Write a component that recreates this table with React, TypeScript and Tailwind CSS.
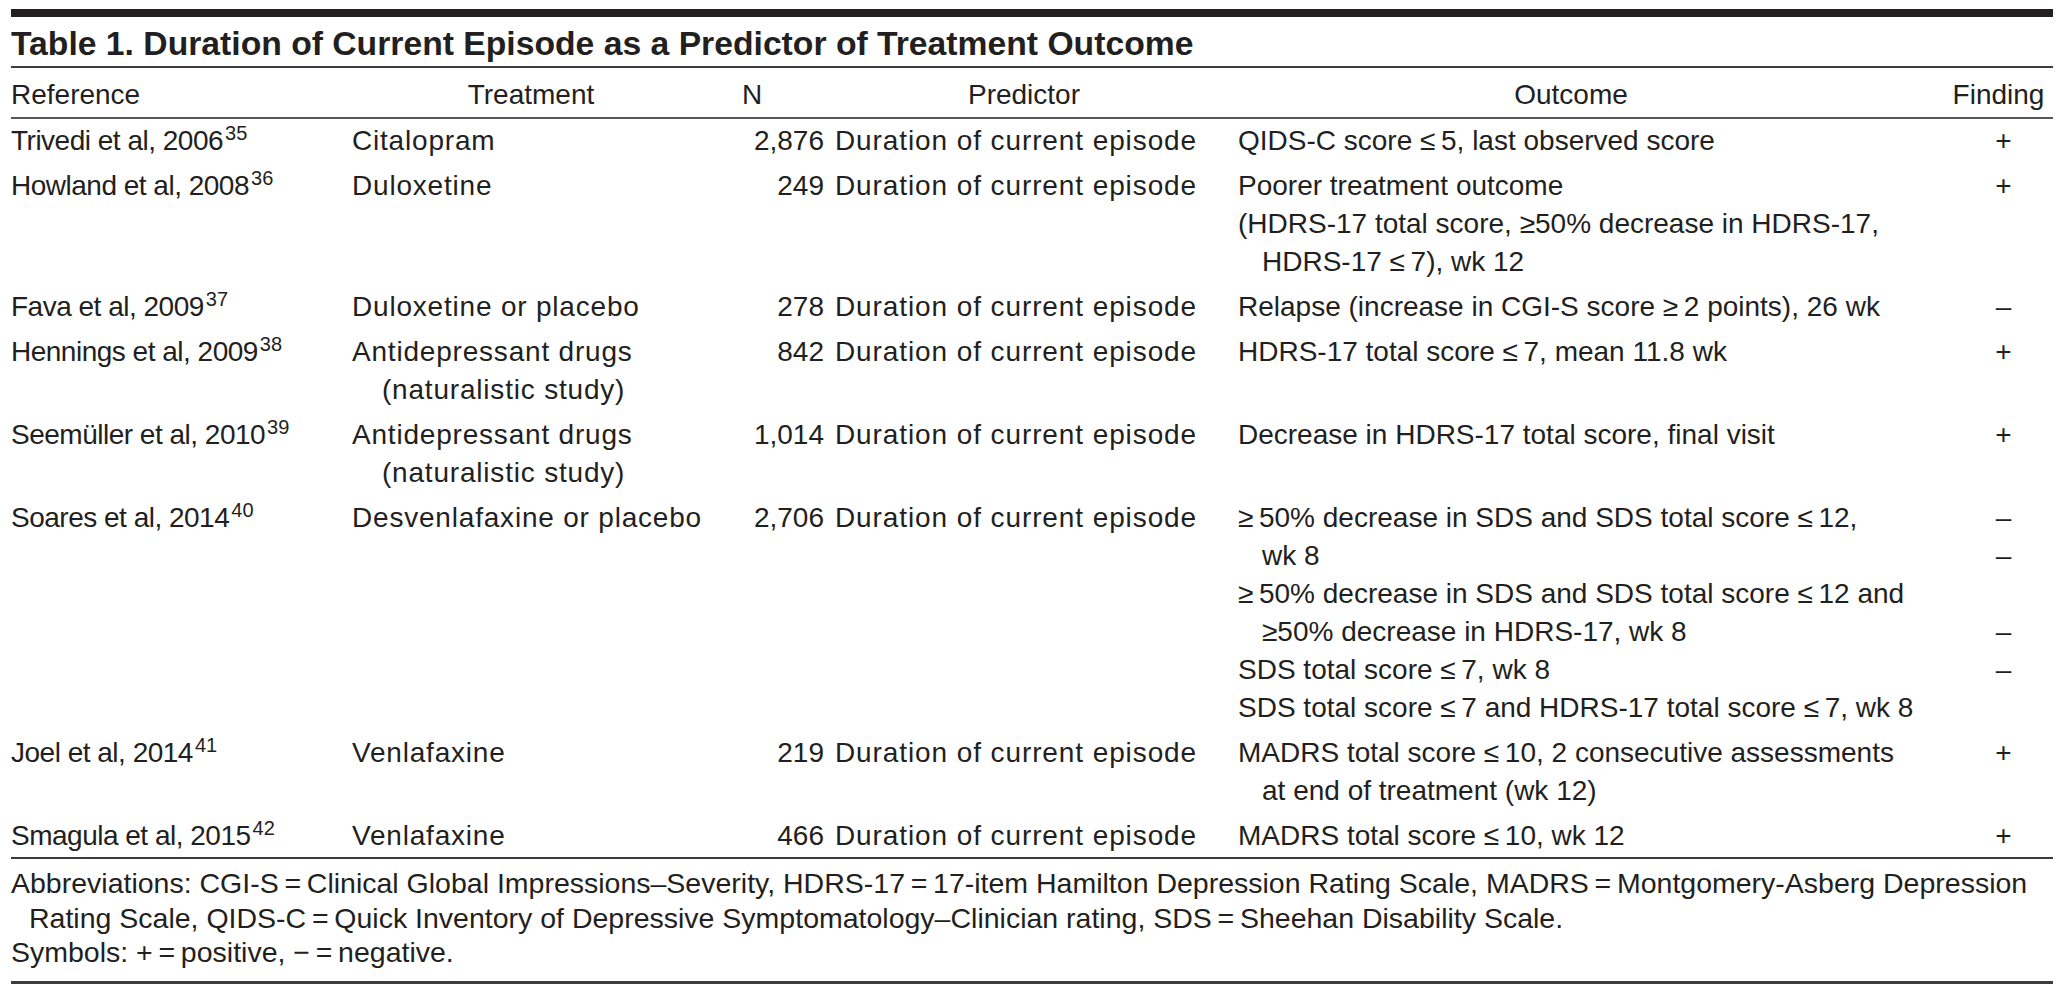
import React from 'react';

// One outcome line: text, whether it is a hanging-indent continuation, and its finding mark.
type Line = { text: string; indent?: boolean; finding?: string };

interface Study {
  reference: string;
  sup: string;
  treatment: Line[];
  n: string;
  predictor: string;
  outcome: Line[];
}

const T = '\u2009'; // thin space used around = and ≤ in the typeset table

const STUDIES: Study[] = [
  {
    reference: 'Trivedi et al, 2006',
    sup: '35',
    treatment: [{ text: 'Citalopram' }],
    n: '2,876',
    predictor: 'Duration of current episode',
    outcome: [{ text: `QIDS-C score ≤${T}5, last observed score`, finding: '+' }],
  },
  {
    reference: 'Howland et al, 2008',
    sup: '36',
    treatment: [{ text: 'Duloxetine' }],
    n: '249',
    predictor: 'Duration of current episode',
    outcome: [
      { text: 'Poorer treatment outcome', finding: '+' },
      { text: '(HDRS-17 total score, ≥50% decrease in HDRS-17,' },
      { text: `HDRS-17 ≤${T}7), wk 12`, indent: true },
    ],
  },
  {
    reference: 'Fava et al, 2009',
    sup: '37',
    treatment: [{ text: 'Duloxetine or placebo' }],
    n: '278',
    predictor: 'Duration of current episode',
    outcome: [{ text: `Relapse (increase in CGI-S score ≥${T}2 points), 26 wk`, finding: '–' }],
  },
  {
    reference: 'Hennings et al, 2009',
    sup: '38',
    treatment: [{ text: 'Antidepressant drugs' }, { text: '(naturalistic study)', indent: true }],
    n: '842',
    predictor: 'Duration of current episode',
    outcome: [{ text: `HDRS-17 total score ≤${T}7, mean 11.8 wk`, finding: '+' }],
  },
  {
    reference: 'Seemüller et al, 2010',
    sup: '39',
    treatment: [{ text: 'Antidepressant drugs' }, { text: '(naturalistic study)', indent: true }],
    n: '1,014',
    predictor: 'Duration of current episode',
    outcome: [{ text: 'Decrease in HDRS-17 total score, final visit', finding: '+' }],
  },
  {
    reference: 'Soares et al, 2014',
    sup: '40',
    treatment: [{ text: 'Desvenlafaxine or placebo' }],
    n: '2,706',
    predictor: 'Duration of current episode',
    outcome: [
      { text: `≥${T}50% decrease in SDS and SDS total score ≤${T}12,`, finding: '–' },
      { text: 'wk 8', indent: true, finding: '–' },
      { text: `≥${T}50% decrease in SDS and SDS total score ≤${T}12 and` },
      { text: '≥50% decrease in HDRS-17, wk 8', indent: true, finding: '–' },
      { text: `SDS total score ≤${T}7, wk 8`, finding: '–' },
      { text: `SDS total score ≤${T}7 and HDRS-17 total score ≤${T}7, wk 8` },
    ],
  },
  {
    reference: 'Joel et al, 2014',
    sup: '41',
    treatment: [{ text: 'Venlafaxine' }],
    n: '219',
    predictor: 'Duration of current episode',
    outcome: [
      { text: `MADRS total score ≤${T}10, 2 consecutive assessments`, finding: '+' },
      { text: 'at end of treatment (wk 12)', indent: true },
    ],
  },
  {
    reference: 'Smagula et al, 2015',
    sup: '42',
    treatment: [{ text: 'Venlafaxine' }],
    n: '466',
    predictor: 'Duration of current episode',
    outcome: [{ text: `MADRS total score ≤${T}10, wk 12`, finding: '+' }],
  },
];

const cols = 'grid grid-cols-[341px_358px_120px_388px_726px_109px]';

function Rule({ className }: { className: string }) {
  return <div className={`w-full bg-[#3c3b3d] ${className}`} />;
}

function StudyRow({ s, first }: { s: Study; first: boolean }) {
  return (
    <div className={`${cols} ${first ? 'pt-[3px]' : 'pt-[7px]'}`}>
      <div className="whitespace-nowrap tracking-[-0.5px]">
        {s.reference}
        <sup className="text-[20px] tracking-normal pl-[2px]">{s.sup}</sup>
      </div>
      <div className="tracking-[0.8px] whitespace-nowrap">
        {s.treatment.map((l, i) => (
          <div key={i} className={l.indent ? 'pl-[30px]' : ''}>{l.text}</div>
        ))}
      </div>
      <div className="text-right pr-[6px]">{s.n}</div>
      <div className="pl-[5px] tracking-[0.9px] whitespace-nowrap">{s.predictor}</div>
      <div className="pl-[20px]">
        {s.outcome.map((l, i) => (
          <div key={i} className={`whitespace-nowrap ${l.indent ? 'pl-[24px]' : ''}`}>{l.text}</div>
        ))}
      </div>
      <div className="text-center pl-[10px]">
        {s.outcome.map((l, i) => (
          <div key={i}>{l.finding ?? '\u00a0'}</div>
        ))}
      </div>
    </div>
  );
}

export default function App() {
  return (
    <div className="min-h-screen bg-white text-[#231f20] font-['Liberation_Sans',Arial,sans-serif]">
      <div className="ml-[11px] w-[2042px] pt-[9px]">
        <Rule className="h-[8px] bg-[#231f20]" />
        <h1 className="text-[33.7px] leading-[40px] font-bold pt-[6px] pb-[3px] whitespace-nowrap">
          Table 1. Duration of Current Episode as a Predictor of Treatment Outcome
        </h1>
        <Rule className="h-[2px]" />

        <div className="text-[28px] leading-[38px]">
          <div className={`${cols} pt-[8px] pb-[3px]`}>
            <div>Reference</div>
            <div className="text-center">Treatment</div>
            <div className="text-center pr-[36px]">N</div>
            <div className="text-center">Predictor</div>
            <div className="text-center pr-[20px]">Outcome</div>
            <div className="text-center">Finding</div>
          </div>
          <Rule className="h-[2px] bg-[#58585a]" />
          <div className="pb-[2px]">
            {STUDIES.map((s, i) => (
              <StudyRow key={s.reference} s={s} first={i === 0} />
            ))}
          </div>
        </div>

        <Rule className="h-[2px]" />
        <div className="text-[28.5px] leading-[34.5px] pt-[7px] pb-[11px] whitespace-nowrap">
          <p>
            Abbreviations: CGI-S{T}={T}Clinical Global Impressions–Severity, HDRS-17{T}={T}17-item Hamilton Depression
            Rating Scale, MADRS{T}={T}Montgomery-Asberg Depression
          </p>
          <p className="pl-[18px]">
            Rating Scale, QIDS-C{T}={T}Quick Inventory of Depressive Symptomatology–Clinician rating, SDS{T}={T}Sheehan
            Disability Scale.
          </p>
          <p>Symbols: +{T}={T}positive, −{T}={T}negative.</p>
        </div>
        <Rule className="h-[3px]" />
      </div>
    </div>
  );
}
